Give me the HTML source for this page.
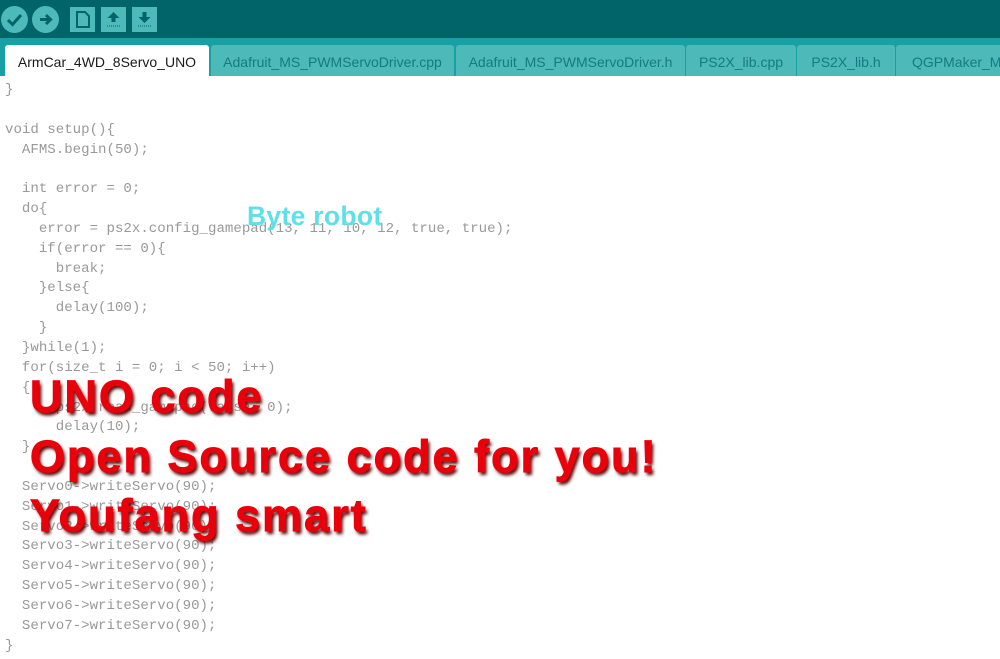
<!DOCTYPE html>
<html><head><meta charset="utf-8"><style>
*{margin:0;padding:0;box-sizing:border-box}
body{width:1000px;height:659px;overflow:hidden;background:#fff;position:relative;font-family:"Liberation Sans",sans-serif}
.top{position:absolute;left:0;top:0;width:1000px;height:38px;background:#006468}
.strip{position:absolute;left:0;top:38px;width:1000px;height:38px;background:#17a1a5}
.btn{position:absolute;top:6px;width:27px;height:27px;background:#4db9b9}
.circ{border-radius:50%}
.tab{position:absolute;top:45px;height:31px;background:#4db9b9;color:#147c7e;font-size:14px;line-height:34px;text-align:center;border-radius:3px 3px 0 0}
.tab.a{background:#fff;color:#1a1a1a}
pre{position:absolute;left:5px;top:81px;font-family:"Liberation Mono",monospace;font-size:14.1px;line-height:19.85px;color:#999}
.by{position:absolute;left:247px;top:201px;font-size:26.5px;font-weight:bold;color:#5fe0e8;letter-spacing:0.3px}
.red{position:absolute;left:30px;font-size:45px;font-weight:bold;color:#e8000a;letter-spacing:2px;text-shadow:2px 3px 3px #500;white-space:nowrap;-webkit-text-stroke:1px #e8000a}
</style></head><body>
<div class="top"></div>
<div class="strip"></div>
<div class="btn circ" style="left:1px"><svg width="27" height="27"><path d="M7 14l4.5 4.5L20 9" stroke="#006468" stroke-width="3" fill="none"/></svg></div>
<div class="btn circ" style="left:32px"><svg width="27" height="27"><path d="M8 13.5h10M14 9l4.5 4.5L14 18" stroke="#006468" stroke-width="3" fill="none"/></svg></div>
<div class="btn" style="left:70px;width:25px;height:25px;top:7px"><svg width="25" height="25"><path d="M7 5h8l4 4v11H7z" fill="none" stroke="#006468" stroke-width="2"/></svg></div>
<div class="btn" style="left:101px;width:25px;height:25px;top:7px"><svg width="25" height="25"><path d="M12.5 5l6 6h-4v4h-4v-4h-4z" fill="#006468"/><path d="M6 19h13" stroke="#006468" stroke-dasharray="1 1"/></svg></div>
<div class="btn" style="left:132px;width:25px;height:25px;top:7px"><svg width="25" height="25"><path d="M12.5 16l6-6h-4V5h-4v5h-4z" fill="#006468"/><path d="M6 19h13" stroke="#006468" stroke-dasharray="1 1"/></svg></div>
<div class="tab a" style="left:5px;width:204px">ArmCar_4WD_8Servo_UNO</div>
<div class="tab" style="left:211px;width:243px">Adafruit_MS_PWMServoDriver.cpp</div>
<div class="tab" style="left:456px;width:229px">Adafruit_MS_PWMServoDriver.h</div>
<div class="tab" style="left:686px;width:110px">PS2X_lib.cpp</div>
<div class="tab" style="left:797px;width:98px">PS2X_lib.h</div>
<div class="tab" style="left:896px;width:140px;text-align:left;padding-left:16px">QGPMaker_Motor</div>
<pre>}

void setup(){
  AFMS.begin(50);

  int error = 0;
  do{
    error = ps2x.config_gamepad(13, 11, 10, 12, true, true);
    if(error == 0){
      break;
    }else{
      delay(100);
    }
  }while(1);
  for(size_t i = 0; i &lt; 50; i++)
  {
      ps2x.read_gamepad(false, 0);
      delay(10);
  }

  Servo0-&gt;writeServo(90);
  Servo1-&gt;writeServo(90);
  Servo2-&gt;writeServo(90);
  Servo3-&gt;writeServo(90);
  Servo4-&gt;writeServo(90);
  Servo5-&gt;writeServo(90);
  Servo6-&gt;writeServo(90);
  Servo7-&gt;writeServo(90);
}</pre>
<div class="by">Byte robot</div>
<div class="red" style="top:371px">UNO code</div>
<div class="red" style="top:431px">Open Source code for you!</div>
<div class="red" style="top:490px">Youfang smart</div>
</body></html>
